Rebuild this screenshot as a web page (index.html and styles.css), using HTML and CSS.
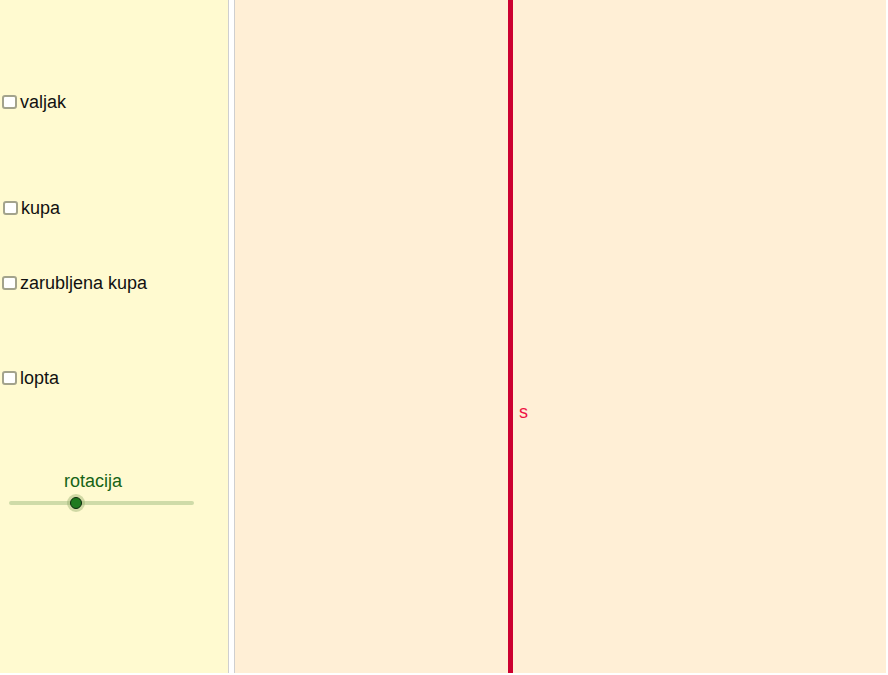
FILE: index.html
```html
<!DOCTYPE html>
<html>
<head>
<meta charset="utf-8">
<link rel="stylesheet" href="styles.css">
</head>
<body>
<div class="app">
  <div class="panel">
    <div class="row row-valjak"><span class="cb"></span><span class="lbl">valjak</span></div>
    <div class="row row-kupa"><span class="cb"></span><span class="lbl">kupa</span></div>
    <div class="row row-zarub"><span class="cb"></span><span class="lbl">zarubljena kupa</span></div>
    <div class="row row-lopta"><span class="cb"></span><span class="lbl">lopta</span></div>
    <div class="slider">
      <div class="slider-label">rotacija</div>
      <div class="track"><span class="knob"></span></div>
    </div>
  </div>
  <div class="divider"></div>
  <div class="canvas">
    <div class="line"></div>
    <div class="line-label">s</div>
  </div>
</div>
</body>
</html>
```
FILE: styles.css
```css
html, body {
  margin: 0;
  padding: 0;
  background: #ffffff;
}
body {
  font-family: "Liberation Sans", Arial, sans-serif;
}
.app {
  display: flex;
  width: 886px;
  height: 673px;
}
.panel {
  width: 228px;
  background: #fffad0;
  display: flex;
  flex-direction: column;
}
.row {
  display: flex;
  align-items: center;
  height: 20px;
  font-size: 18px;
  color: #111;
}
.row-valjak { margin-top: 92px; padding-left: 2px; }
.row-kupa { margin-top: 86px; padding-left: 3px; }
.row-zarub { margin-top: 55px; padding-left: 2px; }
.row-lopta { margin-top: 75px; padding-left: 2px; }
.cb {
  box-sizing: border-box;
  width: 15px;
  height: 14px;
  border: 2px solid #a3a38c;
  border-radius: 3px;
  background: #ffffff;
  margin-right: 3px;
  flex: none;
}
.lbl {
  line-height: 20px;
}
.slider {
  margin-top: 83px;
  display: flex;
  flex-direction: column;
}
.slider-label {
  font-size: 18px;
  color: #166316;
  line-height: 20px;
  padding-left: 64px;
}
.track {
  position: relative;
  margin-top: 10px;
  margin-left: 9px;
  width: 185px;
  height: 4px;
  border-radius: 2px;
  background: #cfdba8;
}
.knob {
  position: absolute;
  left: 61px;
  top: -4px;
  width: 12px;
  height: 12px;
  box-sizing: border-box;
  border-radius: 50%;
  background: #1f7a1f;
  border: 1px solid #0c2a0c;
  box-shadow: 0 0 0 3px rgba(150, 175, 110, 0.45);
}
.divider {
  box-sizing: border-box;
  width: 7px;
  background: #ffffff;
  border-left: 1px solid #cfcfcf;
  border-right: 1px solid #cfcfcf;
}
.canvas {
  position: relative;
  flex: 1;
  background: #ffefd6;
}
.line {
  position: absolute;
  left: 273px;
  top: 0;
  width: 5px;
  height: 100%;
  background: #cc0030;
}
.line-label {
  position: absolute;
  left: 284px;
  top: 402px;
  font-size: 18px;
  color: #ee1144;
}
```
